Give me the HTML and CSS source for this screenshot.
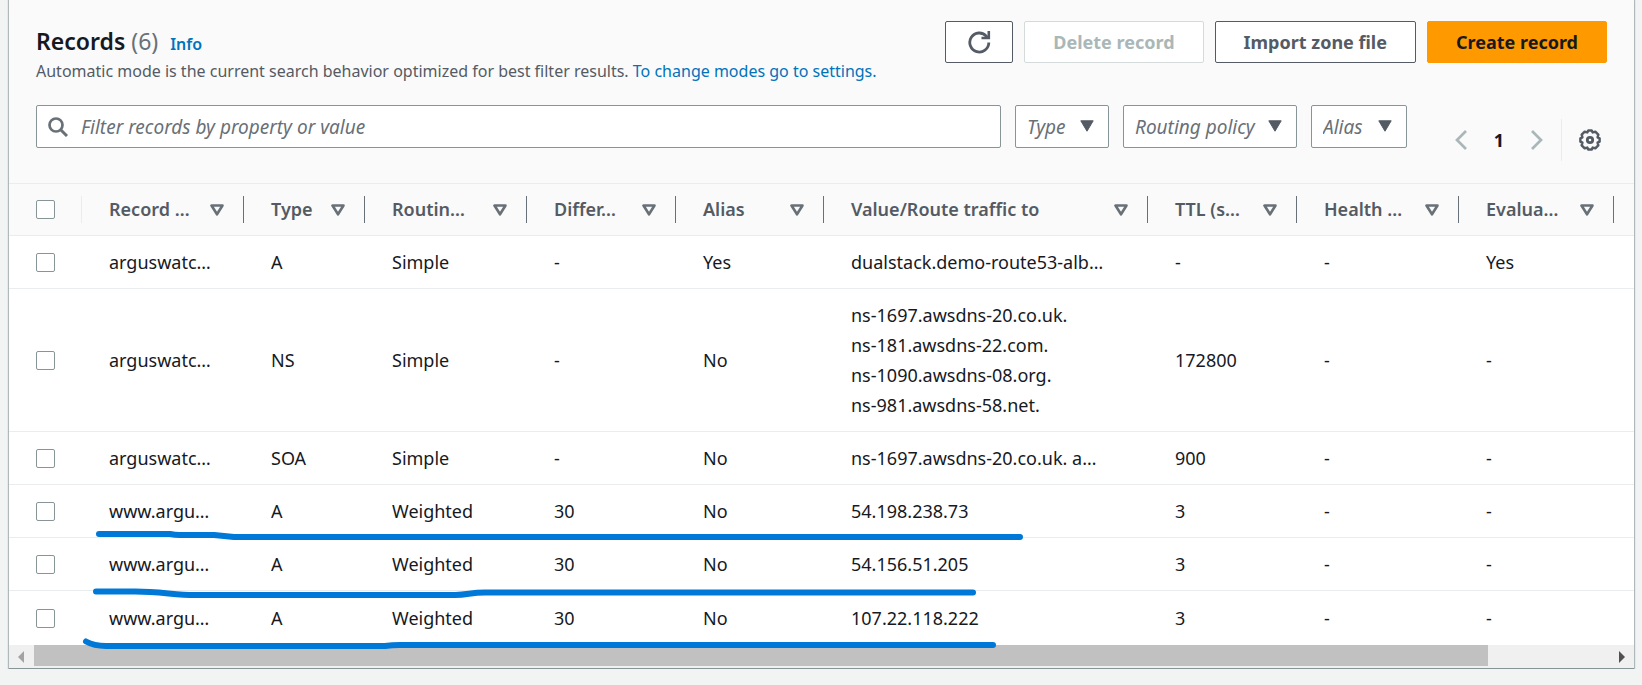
FILE: index.html
```html
<!DOCTYPE html>
<html lang="en">
<head>
<meta charset="utf-8">
<title>Records</title>
<link rel="stylesheet" href="styles.css">
</head>
<body>
<svg class="defs" aria-hidden="true">
  <symbol id="sort" viewBox="0 0 14 12"><path d="M1.5 1.5h11L7 10.3z" fill="none" stroke="currentColor" stroke-width="2.6" stroke-linejoin="round"/></symbol>
  <symbol id="caret" viewBox="0 0 14 12"><path d="M.8 .8h12.4L7 11.2z" fill="currentColor" stroke="currentColor" stroke-linejoin="round"/></symbol>
</svg>
<main class="card">
  <header class="card-header">
    <div class="title-row">
      <div>
        <div class="title"><h2>Records <span class="count">(6)</span></h2><a class="info" href="#">Info</a></div>
        <p class="description">Automatic mode is the current search behavior optimized for best filter results. <a href="#">To change modes go to settings.</a></p>
      </div>
      <div class="actions">
        <button class="btn btn-icon" type="button" aria-label="Refresh">
          <svg class="icon-refresh" viewBox="0 0 24 24"><path d="M21.800 12.500A9.500 9.500 0 1 1 19.500 6.300L20.500 7.500" fill="none" stroke="currentColor" stroke-width="2.800"/><path d="M21.800 1V8H14.500" fill="none" stroke="currentColor" stroke-width="2.600"/></svg>
        </button>
        <button class="btn" type="button" disabled>Delete record</button>
        <button class="btn" type="button">Import zone file</button>
        <button class="btn btn-primary" type="button">Create record</button>
      </div>
    </div>
    <div class="tools">
      <div class="filters">
        <label class="search">
          <svg class="icon-search" viewBox="0 0 20 20"><circle cx="8" cy="8" r="6.500" fill="none" stroke="currentColor" stroke-width="2.700"/><path d="M12.700 12.700 19 19" stroke="currentColor" stroke-width="3"/></svg>
          <input type="text" aria-label="Filter records" placeholder="Filter records by property or value">
        </label>
        <label class="select select-type"><select aria-label="Type"><option>Type</option></select><svg><use href="#caret"/></svg></label>
        <label class="select select-policy"><select aria-label="Routing policy"><option>Routing policy</option></select><svg><use href="#caret"/></svg></label>
        <label class="select select-alias"><select aria-label="Alias"><option>Alias</option></select><svg><use href="#caret"/></svg></label>
      </div>
      <nav class="pagination" aria-label="Pages">
        <button class="plain" type="button" aria-label="Previous page" disabled><svg class="icon-chevron" viewBox="0 0 12 20"><path d="M11 1 2 10l9 9" fill="none" stroke="currentColor" stroke-width="2.700"/></svg></button>
        <button class="plain page" type="button">1</button>
        <button class="plain" type="button" aria-label="Next page" disabled><svg class="icon-chevron" viewBox="0 0 12 20"><path d="m1 1 9 9-9 9" fill="none" stroke="currentColor" stroke-width="2.700"/></svg></button>
        <button class="plain settings" type="button" aria-label="Preferences">
          <svg class="icon-gear" viewBox="-11 -11 22 22"><g fill="none" stroke="currentColor" stroke-linejoin="round"><path stroke-width="2.500" d="M-1.600-9.600H1.600L2.700-7.600 5.300-8.300 8.300-5.300 7.600-2.700 9.600-1.600V1.600L7.600 2.700 8.300 5.300 5.300 8.300 2.700 7.600 1.600 9.600H-1.600L-2.700 7.600-5.300 8.300-8.300 5.300-7.600 2.700-9.600 1.600V-1.600L-7.600-2.700-8.300-5.300-5.300-8.300-2.700-7.600z"/><circle stroke-width="2.800" r="2.700"/></g></svg>
        </button>
      </nav>
    </div>
  </header>
  <div class="table-wrap">
    <table>
      <colgroup><col class="c-check"><col class="c-162"><col class="c-121"><col class="c-162"><col class="c-149"><col class="c-148"><col class="c-value"><col class="c-149"><col class="c-162"><col class="c-155"><col></colgroup>
      <thead>
        <tr>
          <th class="check"><div class="check-head"><input type="checkbox" aria-label="Select all"></div></th>
          <th><div class="head"><span>Record …</span><svg><use href="#sort"/></svg></div></th>
          <th><div class="head"><span>Type</span><svg><use href="#sort"/></svg></div></th>
          <th><div class="head"><span>Routin…</span><svg><use href="#sort"/></svg></div></th>
          <th><div class="head"><span>Differ…</span><svg><use href="#sort"/></svg></div></th>
          <th><div class="head"><span>Alias</span><svg><use href="#sort"/></svg></div></th>
          <th><div class="head"><span>Value/Route traffic to</span><svg><use href="#sort"/></svg></div></th>
          <th><div class="head"><span>TTL (s…</span><svg><use href="#sort"/></svg></div></th>
          <th><div class="head"><span>Health …</span><svg><use href="#sort"/></svg></div></th>
          <th><div class="head"><span>Evalua…</span><svg><use href="#sort"/></svg></div></th>
          <th class="rest"></th>
        </tr>
      </thead>
      <tbody>
        <tr><td class="check"><input type="checkbox" aria-label="Select record 1"></td><td>arguswatc…</td><td>A</td><td>Simple</td><td>-</td><td>Yes</td><td>dualstack.demo-route53-alb…</td><td>-</td><td>-</td><td>Yes</td><td></td></tr>
        <tr><td class="check"><input type="checkbox" aria-label="Select record 2"></td><td>arguswatc…</td><td>NS</td><td>Simple</td><td>-</td><td>No</td><td>ns-1697.awsdns-20.co.uk.<br>ns-181.awsdns-22.com.<br>ns-1090.awsdns-08.org.<br>ns-981.awsdns-58.net.</td><td>172800</td><td>-</td><td>-</td><td></td></tr>
        <tr><td class="check"><input type="checkbox" aria-label="Select record 3"></td><td>arguswatc…</td><td>SOA</td><td>Simple</td><td>-</td><td>No</td><td>ns-1697.awsdns-20.co.uk. a…</td><td>900</td><td>-</td><td>-</td><td></td></tr>
        <tr><td class="check"><input type="checkbox" aria-label="Select record 4"></td><td>www.argu…</td><td>A</td><td>Weighted</td><td>30</td><td>No</td><td>54.198.238.73</td><td>3</td><td>-</td><td>-</td><td></td></tr>
        <tr><td class="check"><input type="checkbox" aria-label="Select record 5"></td><td>www.argu…</td><td>A</td><td>Weighted</td><td>30</td><td>No</td><td>54.156.51.205</td><td>3</td><td>-</td><td>-</td><td></td></tr>
        <tr><td class="check"><input type="checkbox" aria-label="Select record 6"></td><td>www.argu…</td><td>A</td><td>Weighted</td><td>30</td><td>No</td><td>107.22.118.222</td><td>3</td><td>-</td><td>-</td><td></td></tr>
      </tbody>
    </table>
  </div>
  <div class="scrollbar" aria-hidden="true">
    <svg viewBox="0 0 6 12"><path d="M6 0v12L0 6z" fill="#a3a3a3"/></svg>
    <div class="track"><div class="thumb"></div></div>
    <svg viewBox="0 0 6 12"><path d="M0 0v12l6-6z" fill="#505050"/></svg>
  </div>
  <svg class="marks" width="1040" height="148" viewBox="9 520 1040 148" aria-hidden="true">
    <g fill="none" stroke="#0078d7" stroke-width="6" stroke-linecap="round" stroke-linejoin="round">
      <path d="M99 534H170Q175 535 180 535H214L234 537H1020"/>
      <path d="M96 591.500H135C160 591.500 175 595 195 595H455C468 595 470 592.500 485 592.500H973"/>
      <path d="M86 641.500Q94 646 106 646H385Q392 645 400 645H993"/>
    </g>
  </svg>
</main>
</body>
</html>
```
FILE: styles.css
```css
* { box-sizing: border-box; }

body {
  margin: 0;
  padding: 0 8px 0 9px;
  background: #f2f3f3;
  color: #16191f;
  font: 18px/30px "Noto Sans", "Open Sans", sans-serif;
}

a { color: #0073bb; text-decoration: none; }
button, input, select { font: inherit; color: inherit; margin: 0; }
.defs { position: absolute; width: 0; height: 0; }

.card {
  position: relative;
  border-bottom: 1px solid #879596;
  background: #fff;
  box-shadow: 0 1px 1px 0 rgba(0, 28, 36, .2), 1px 0 1px 0 rgba(0, 28, 36, .25), -1px 0 1px 0 rgba(0, 28, 36, .25);
}

.card-header {
  padding: 21px 27px 22px;
  background: #fafafa;
}

.title-row { display: flex; justify-content: space-between; align-items: flex-start; }
.title { display: flex; align-items: baseline; gap: 12px; padding-top: 5px; }
h2 { margin: 0; font-size: 23px; line-height: 30px; font-weight: 600; }
.count { color: #687078; font-weight: 400; }
.info { font-size: 16px; line-height: 20px; font-weight: 600; }
.description { margin: 0; font-size: 16px; line-height: 30px; color: #545b64; }

.actions { display: flex; gap: 11px; }
.btn {
  height: 42px;
  padding: 0 28px;
  border: 1px solid #545b64;
  border-radius: 2px;
  background: #fff;
  color: #545b64;
  font-weight: 700;
  white-space: nowrap;
}
.btn:disabled { border-color: #d5dbdb; color: #aab7b8; }
.btn-icon { display: flex; align-items: center; padding: 0 21px; }
.btn-primary { border-color: #ff9900; background: #ff9900; color: #16191f; }
.icon-refresh { width: 24px; height: 24px; }

.tools { display: flex; gap: 40px; padding-top: 19px; }
.filters { display: flex; flex: 1; gap: 14px; }
.search { position: relative; flex: 1; color: #687078; }
.icon-search { position: absolute; left: 12px; top: 12px; width: 20px; height: 20px; }
.search input {
  display: block;
  width: 100%;
  height: 43px;
  padding: 0 12px 0 44px;
  border: 1px solid #879596;
  border-radius: 2px;
  background: #fff;
  font-size: 19px;
}
.search input::placeholder { color: #687078; font-style: italic; opacity: 1; }

.select { position: relative; color: #545b64; }
.select select {
  display: block;
  appearance: none;
  width: 100%;
  height: 43px;
  padding: 0 11px;
  border: 1px solid #879596;
  border-radius: 2px;
  background: #fff;
  color: #687078;
  font-size: 19px;
  font-style: italic;
}
.select svg { position: absolute; right: 15px; top: 15px; width: 14px; height: 12px; pointer-events: none; }
.select-type { width: 94px; }
.select-policy { width: 174px; }
.select-alias { width: 96px; }

.pagination { display: flex; align-items: center; gap: 10px; height: 42px; margin-top: 14px; }
.plain {
  display: flex;
  align-items: center;
  justify-content: center;
  width: 28px;
  padding: 0;
  border: 0;
  background: none;
  color: #545b64;
}
.plain:disabled { color: #aab7b8; }
.page { color: #16191f; font-weight: 700; }
.icon-chevron { width: 12px; height: 20px; }
.plain.settings { width: 46px; height: 42px; padding-left: 10px; border-left: 1px solid #eaeded; }
.icon-gear { width: 22px; height: 22px; }

.table-wrap { overflow: hidden; }
table { width: 100%; table-layout: fixed; border-collapse: separate; border-spacing: 0; }
.c-check { width: 73px; }
.c-121 { width: 121px; }
.c-148 { width: 148px; }
.c-149 { width: 149px; }
.c-155 { width: 155px; }
.c-162 { width: 162px; }
.c-value { width: 324px; }

th { height: 53px; padding: 0; border-top: 1px solid #eaeded; border-bottom: 1px solid #eaeded; background: #fafafa; text-align: left; color: #545b64; font-weight: 600; }
.head {
  display: flex;
  align-items: center;
  justify-content: space-between;
  height: 27px;
  padding: 0 19px 0 27px;
  border-right: 1px solid #687078;
  white-space: nowrap;
}
.head span { line-height: 28px; padding-bottom: 2px; }
.head svg { flex: none; width: 14px; height: 12px; color: #687078; }
td { padding: 11px 0 11px 27px; border-bottom: 1px solid #eaeded; white-space: nowrap; }
tbody tr:last-child td { height: 54px; border-bottom: 0; }
.check { padding: 0 0 0 27px; }
.check-head { display: flex; align-items: center; height: 27px; border-right: 1px solid #eaeded; }
.check input {
  display: block;
  appearance: none;
  width: 19px;
  height: 19px;
  border: 1px solid #879596;
  border-radius: 2px;
  background: #fff;
}

.marks { position: absolute; left: 0; bottom: 0; pointer-events: none; }

.scrollbar { display: flex; align-items: center; gap: 10px; height: 23px; padding: 0 9px; background: #f0f0f0; }
.scrollbar > svg { flex: none; width: 6px; height: 12px; }
.track { flex: 1; align-self: stretch; padding-bottom: 2px; }
.thumb { width: 92.3%; height: 100%; background: #c1c1c1; }
```
